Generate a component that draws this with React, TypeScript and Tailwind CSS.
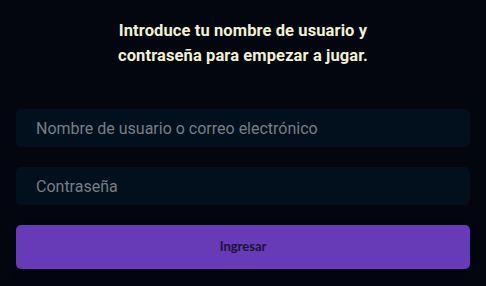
export default function App() {
  return (
    <div className="min-h-screen bg-[#03060f] px-4 pt-[18px] font-['Roboto',sans-serif]">
      <h1 className="text-center text-[16.5px] font-bold leading-[25px] tracking-[0.1px] text-[#f1f0d4]">
        Introduce tu nombre de usuario y
        <br />
        contraseña para empezar a jugar.
      </h1>
      <form className="mt-[41px] flex flex-col gap-5" onSubmit={(e) => e.preventDefault()}>
        <input
          type="text"
          placeholder="Nombre de usuario o correo electrónico"
          className="h-[38px] w-full rounded-[5px] bg-[#020f1c] px-5 text-[16px] text-[#c9ccd1] outline-none placeholder:text-[#787e86]"
        />
        <input
          type="password"
          placeholder="Contraseña"
          className="h-[38px] w-full rounded-[5px] bg-[#020f1c] px-5 text-[16px] text-[#c9ccd1] outline-none placeholder:text-[#787e86]"
        />
        <button
          type="submit"
          className="h-[44px] w-full rounded-[5px] bg-[#673ab7] font-['Lato',sans-serif] text-[13px] font-bold text-[#1b1530] shadow-[0_4px_6px_rgba(0,0,0,0.35)]"
        >
          Ingresar
        </button>
      </form>
    </div>
  );
}
